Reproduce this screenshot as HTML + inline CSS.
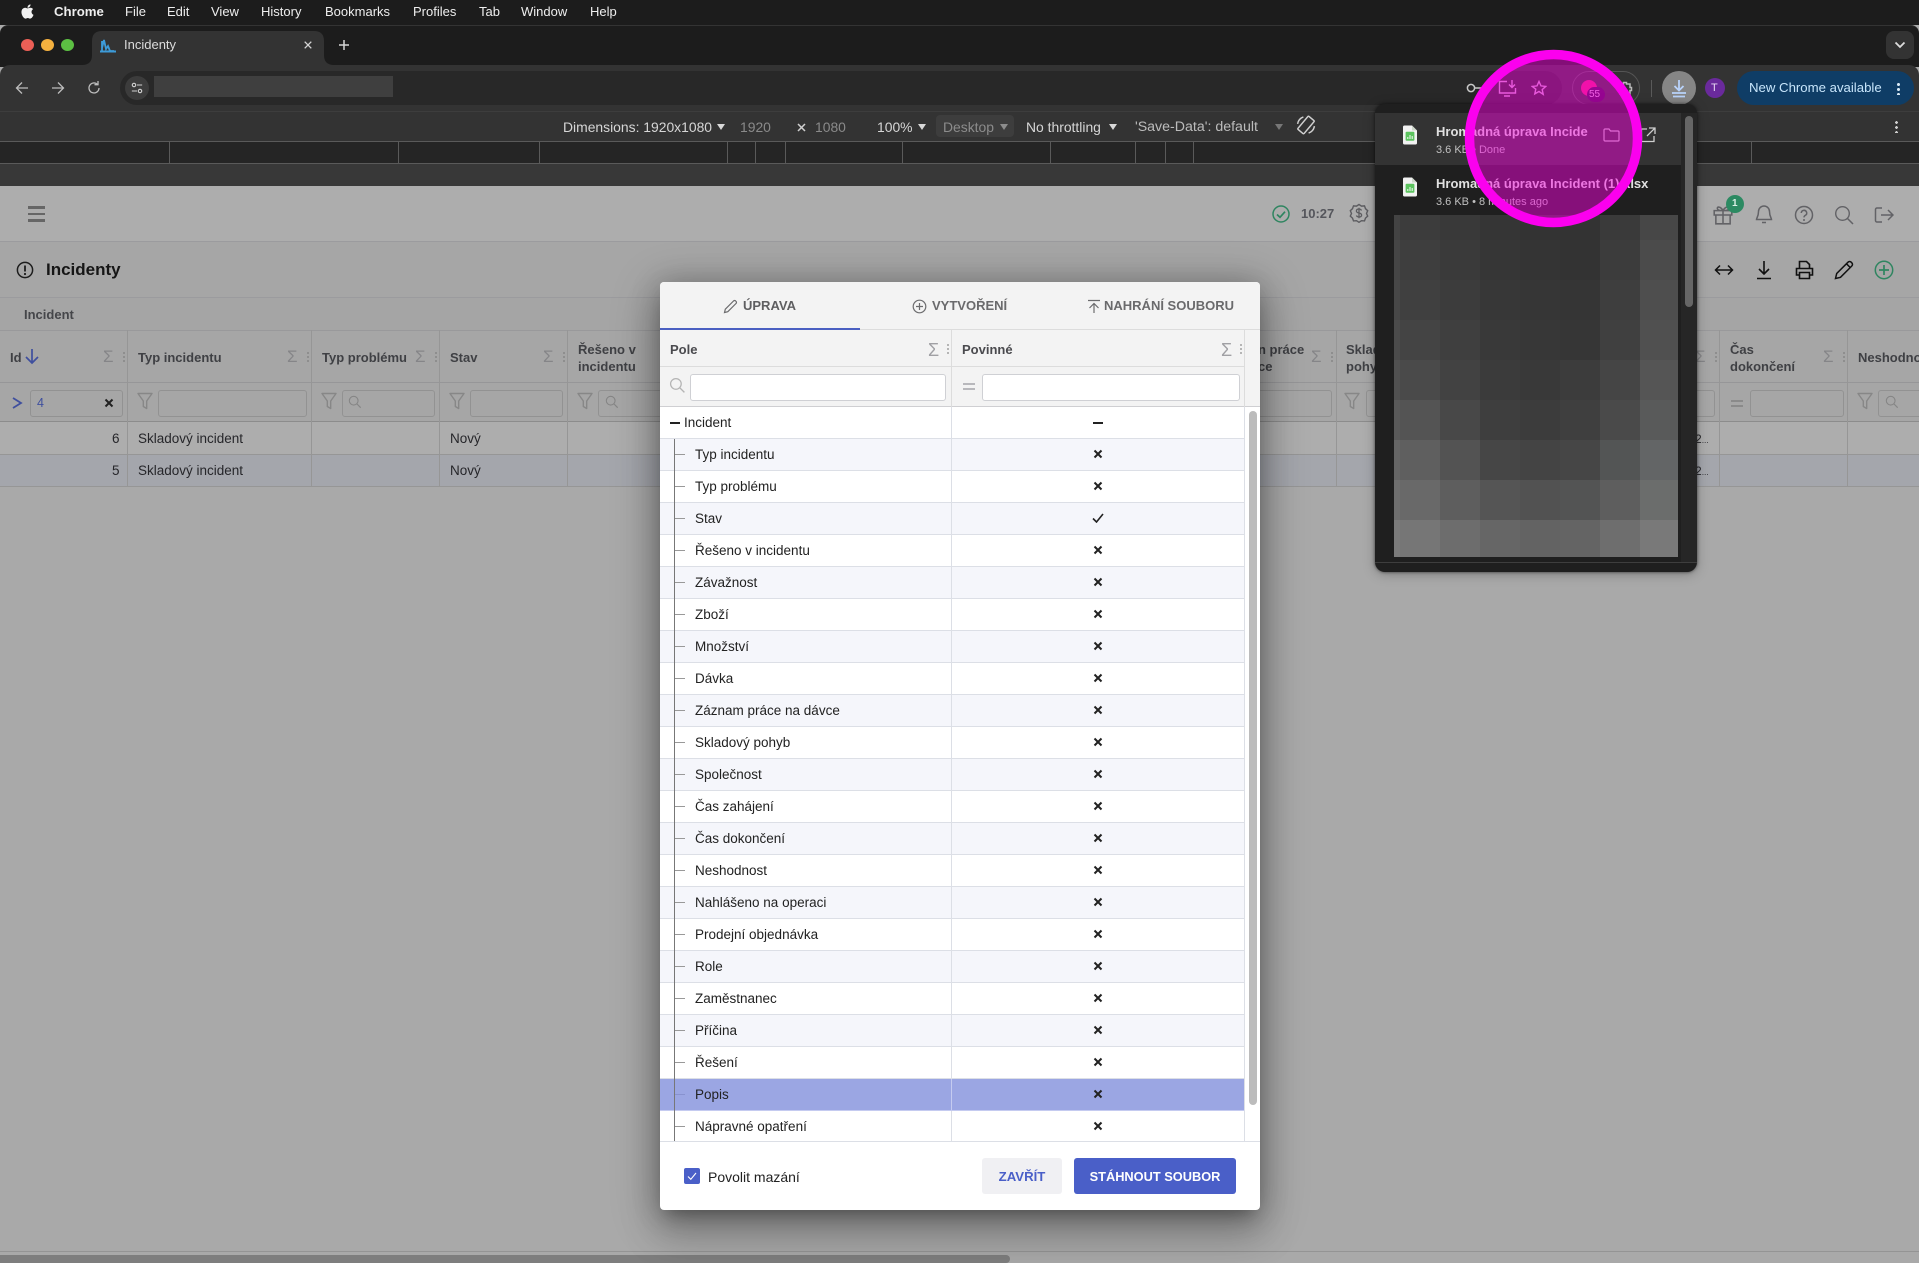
<!DOCTYPE html>
<html lang="cs"><head><meta charset="utf-8"><title>Incidenty</title>
<style>
html,body{margin:0;padding:0;background:#ababab}
#root{position:relative;width:1919px;height:1263px;overflow:hidden;font-family:"Liberation Sans",sans-serif;background:#a9a9a9}
#root div,#root span,#root svg{position:absolute}
.t{white-space:nowrap;line-height:16px}
.b{font-weight:bold}
.mn{top:4px;color:#eee;font-size:13px}
.db{top:119px;font-size:13.9px;color:#d6d6d6}
.tick{top:142px;width:1px;height:21px;background:#5a5a5a}
.car{width:0;height:0;border-left:4.5px solid transparent;border-right:4.5px solid transparent;border-top:6px solid #d8d8d8;top:124px}
.hd{font-size:13px;font-weight:bold;color:#3f4044;line-height:17px;white-space:nowrap}
.vl{width:1px;top:330px;height:156px;background:#969696}
.hl{left:0;width:1919px;height:1px;background:#969696}
.sg{font-size:17px;color:#858588;line-height:16px;top:349px}
.dots{width:2px;height:12px;background:radial-gradient(circle,#8a8a8a 1px,transparent 1.1px) 0 0/2px 4px}
.inp{top:390px;height:25px;border:1px solid #929292;border-radius:3px;box-sizing:content-box}
.cell{font-size:13.5px;color:#26262a;line-height:16px;white-space:nowrap}
#dlg{left:660px;top:282px;width:600px;height:928px;background:#fff;border-radius:4px;box-shadow:0 11px 15px -7px rgba(0,0,0,.25),0 24px 38px 3px rgba(0,0,0,.18),0 9px 46px 8px rgba(0,0,0,.16),0 0 30px rgba(0,0,0,.18)}
.dtab{top:16px;font-size:13px;font-weight:bold;color:#6a6a6c;white-space:nowrap;line-height:16px}
#rows{left:0;top:125px;width:584px;height:734px;overflow:hidden}
.r{position:relative!important;display:block;height:32px;width:584px;box-sizing:border-box;border-bottom:1px solid #dcdfe6;background:#fff}
.r.o{background:#f5f6fb}
.r.s{background:#9ba6e3;border-bottom-color:#c5cbf0}
.r .n{left:35px;top:8px;font-size:13.5px;color:#222;white-space:nowrap;line-height:16px}
.r .h{left:15px;top:15px;width:10px;height:1px;background:#999}
.r .c{left:291px;top:0;width:1px;height:32px;background:#dcdfe6}
.r svg{left:433px;top:10px;width:10px;height:10px}
.di{top:0;left:0}
.fi{top:392px;width:16px;height:18px}
</style></head><body>
<div id="root">
<svg width="0" height="0" style="left:0;top:0"><defs>
<symbol id="funnel" viewBox="0 0 16 18"><path d="M1 1.5h14L9.7 9v7.5L6.3 14.5V9z" fill="none" stroke="#878787" stroke-width="1.4" stroke-linejoin="round"/></symbol>
<symbol id="mag" viewBox="0 0 16 16"><circle cx="6.5" cy="6.5" r="5" fill="none" stroke="currentColor" stroke-width="1.2"/><path d="M10.3 10.3l4.2 4.2" stroke="currentColor" stroke-width="1.3" fill="none"/></symbol>
<symbol id="x" viewBox="0 0 10 10"><path d="M1.5 1.5l7 7M8.5 1.5l-7 7" stroke="#222" stroke-width="2" fill="none"/></symbol>
<symbol id="xl" viewBox="0 0 16 20"><path d="M1 2a1.5 1.5 0 0 1 1.5-1.5H10L15 5.5V18a1.5 1.5 0 0 1-1.5 1.5h-11A1.5 1.5 0 0 1 1 18z" fill="#f2f2f2"/><path d="M10 .5V5.5H15z" fill="#cfd8cc"/><rect x="3.6" y="6.8" width="8.8" height="9" rx="1" fill="#5cc45f"/><path d="M5.8 14v-2M8 14v-4M10.2 14v-3" stroke="#e8f6e8" stroke-width="1.1"/></symbol>
</defs></svg>

<!-- menu bar -->
<div style="left:0;top:0;width:1919px;height:25px;background:#1c1c1c"></div>
<svg style="left:18px;top:2px" width="19" height="19" viewBox="0 0 24 24"><path fill="#f2f2f2" d="M17.05 20.28c-.98.95-2.05.8-3.08.35-1.09-.46-2.09-.48-3.24 0-1.44.62-2.2.44-3.06-.35C2.79 15.25 3.51 7.59 9.05 7.31c1.35.07 2.29.74 3.08.8 1.18-.24 2.31-.93 3.57-.84 1.51.12 2.65.72 3.4 1.8-3.12 1.87-2.38 5.98.48 7.13-.57 1.5-1.31 2.99-2.54 4.09zM12.03 7.25c-.15-2.23 1.66-4.07 3.74-4.25.29 2.58-2.34 4.5-3.74 4.25z"/></svg>
<span class="t mn b" style="left:54px;font-size:13.2px">Chrome</span>
<span class="t mn" style="left:125px">File</span>
<span class="t mn" style="left:167px">Edit</span>
<span class="t mn" style="left:211px">View</span>
<span class="t mn" style="left:261px">History</span>
<span class="t mn" style="left:325px">Bookmarks</span>
<span class="t mn" style="left:413px">Profiles</span>
<span class="t mn" style="left:479px">Tab</span>
<span class="t mn" style="left:521px">Window</span>
<span class="t mn" style="left:590px">Help</span>

<!-- tab strip -->
<div style="left:0;top:25px;width:1919px;height:42px;background:#1c1c1c;border-top:1px solid #333;border-radius:8px 8px 0 0;box-sizing:border-box"></div>
<div style="left:21px;top:39px;width:13px;height:12px;border-radius:50%;background:#ec5f56"></div>
<div style="left:41px;top:39px;width:13px;height:12px;border-radius:50%;background:#f5b13f"></div>
<div style="left:61px;top:39px;width:13px;height:12px;border-radius:50%;background:#5cc043"></div>
<svg style="left:80px;top:31px" width="262" height="35" viewBox="80 31 262 35"><path fill="#333" d="M82 65Q92 65 92 55V41Q92 31 102 31H314Q324 31 324 41V55Q324 65 334 65z"/></svg>
<svg style="left:99px;top:38px" width="18" height="15" viewBox="0 0 18 15"><path d="M1 13.5h16" stroke="#3d9bd8" stroke-width="2" fill="none"/><path d="M3 13V3M3 10L5 2l2 9 2-3 2 5h4" stroke="#3d9bd8" stroke-width="1.8" fill="none"/></svg>
<span class="t" style="left:124px;top:37px;font-size:13px;color:#dcdcdc">Incidenty</span>
<svg style="left:304px;top:41px" width="8" height="8" viewBox="0 0 8 8"><path d="M.7.7l6.600 6.600M7.300.7L.7 7.300" stroke="#d5d5d5" stroke-width="1.3"/></svg>
<svg style="left:338px;top:39px" width="12" height="12" viewBox="0 0 12 12"><path d="M6 1v10M1 6h10" stroke="#d5d5d5" stroke-width="1.5"/></svg>
<div style="left:1886px;top:31px;width:28px;height:28px;background:#333;border-radius:8px"></div>
<svg style="left:1894px;top:41px" width="12" height="8" viewBox="0 0 12 8"><path d="M1.5 1.5L6 6l4.5-4.5" fill="none" stroke="#ddd" stroke-width="1.8"/></svg>

<!-- toolbar -->
<div style="left:0;top:65px;width:1919px;height:46px;background:#333;border-radius:10px 10px 0 0"></div>
<svg style="left:14px;top:80px" width="16" height="16" viewBox="0 0 16 16"><path d="M14 8H2.5M8 2.5L2.5 8 8 13.5" fill="none" stroke="#bdbdbd" stroke-width="1.3"/></svg>
<svg style="left:50px;top:80px" width="16" height="16" viewBox="0 0 16 16"><path d="M2 8h11.5M8 2.5L13.5 8 8 13.5" fill="none" stroke="#bdbdbd" stroke-width="1.3"/></svg>
<svg style="left:86px;top:80px" width="16" height="16" viewBox="0 0 16 16"><path d="M13 8a5 5 0 1 1-1.600-3.700M12 1v3.700H8.500" fill="none" stroke="#bdbdbd" stroke-width="1.3"/></svg>
<div style="left:120px;top:71px;width:1442px;height:34px;background:#282828;border-radius:17px"></div>
<div style="left:125px;top:76px;width:24px;height:24px;background:#3c3c3c;border-radius:50%"></div>
<svg style="left:131px;top:82px" width="12" height="12" viewBox="0 0 14 14"><circle cx="3.5" cy="3.5" r="2" fill="none" stroke="#d0d0d0" stroke-width="1.3"/><circle cx="10.5" cy="10.5" r="2" fill="none" stroke="#d0d0d0" stroke-width="1.3"/><path d="M7 3.5h6M1 10.5h6" stroke="#d0d0d0" stroke-width="1.3"/></svg>
<div style="left:154px;top:76px;width:239px;height:21px;background:#3f3f3f"></div>
<svg style="left:1466px;top:81px" width="20" height="14" viewBox="0 0 20 14"><circle cx="5" cy="7" r="3.6" fill="none" stroke="#c8c8c8" stroke-width="1.5"/><path d="M8.5 7H19" stroke="#c8c8c8" stroke-width="1.5"/></svg>
<svg style="left:1498px;top:79px" width="20" height="18" viewBox="0 0 20 18"><path d="M9 2.500H1.500V14h16V9M6 17h6M14 1v7.500M11 5.500l3 3 3-3" fill="none" stroke="#d8a8d8" stroke-width="1.4"/></svg>
<svg style="left:1531px;top:80px" width="16" height="16" viewBox="0 0 16 16"><path d="M8 1.500l2 4.400 4.800.5-3.600 3.200 1 4.700L8 11.500l-4.200 2.400 1-4.700L1.200 6.400 6 5.900z" fill="none" stroke="#d8a8d8" stroke-width="1.4"/></svg>
<div style="left:1572px;top:71px;width:68px;height:34px;border:1px solid #555;border-radius:17px;box-sizing:border-box"></div>
<div style="left:1581px;top:80px;width:16px;height:16px;background:#e8207a;border-radius:50%"></div>
<div style="left:1587px;top:87px;width:18px;height:15px;background:#3d0a4a;border-radius:8px"></div>
<span class="t" style="left:1589px;top:87px;font-size:10px;color:#e9b8e9">55</span>
<svg style="left:1618px;top:80px" width="16" height="16" viewBox="0 0 16 16"><path d="M2 4h3.500V2.500h3V4H12v3.500h1.500v3H12V14H2z" fill="none" stroke="#b8b8b8" stroke-width="1.5"/></svg>
<div style="left:1651px;top:80px;width:1px;height:17px;background:#5a5a5a"></div>
<div style="left:1662px;top:71px;width:34px;height:34px;background:#868686;border-radius:50%"></div>
<svg style="left:1670px;top:79px" width="18" height="19" viewBox="0 0 18 19"><path d="M9 1v10M4.500 7L9 11.500 13.500 7M2 14h14M3 17.500h12" fill="none" stroke="#b9d3fb" stroke-width="1.8"/></svg>
<div style="left:1705px;top:78px;width:20px;height:20px;background:#6a2a9c;border-radius:50%"></div>
<span class="t" style="left:1711px;top:80px;font-size:11px;color:#e6d6f2">T</span>
<div style="left:1737px;top:71px;width:177px;height:34px;background:#0f3d66;border-radius:17px"></div>
<span class="t" style="left:1749px;top:80px;font-size:13.2px;color:#c7e5fb">New Chrome available</span>
<div class="dots" style="left:1897px;top:82px;width:3px;height:13px;background:radial-gradient(circle,#d8e8f4 1.4px,transparent 1.6px) 0 0/3px 5px"></div>

<!-- device toolbar -->
<div style="left:0;top:111px;width:1919px;height:30px;background:#333;border-top:1px solid #3d3d3d;box-sizing:border-box"></div>
<span class="t db" style="left:563px">Dimensions: 1920x1080</span><div class="car" style="left:717px"></div>
<span class="t db" style="left:740px;color:#8a8a8a">1920</span>
<svg style="left:797px;top:123px" width="9" height="9" viewBox="0 0 9 9"><path d="M1 1l7 7M8 1L1 8" stroke="#cfcfcf" stroke-width="1.5"/></svg>
<span class="t db" style="left:815px;color:#8a8a8a">1080</span>
<span class="t db" style="left:877px">100%</span><div class="car" style="left:918px"></div>
<div style="left:936px;top:115px;width:78px;height:22px;background:#3d3d3d;border-radius:4px"></div>
<span class="t db" style="left:943px;color:#8c8c8c">Desktop</span><div class="car" style="left:1000px;border-top-color:#8c8c8c"></div>
<span class="t db" style="left:1026px">No throttling</span><div class="car" style="left:1109px"></div>
<span class="t db" style="left:1135px;color:#bcbcbc;font-size:14.2px">'Save-Data': default</span><div class="car" style="left:1275px;border-top-color:#777"></div>
<svg style="left:1296px;top:115px" width="20" height="20" viewBox="0 0 20 20"><g fill="none" stroke="#d0d0d0" stroke-width="1.5" transform="rotate(40 10 10)"><rect x="6" y="1.500" width="8" height="17" rx="1"/><path d="M2.800 5.500A9 9 0 0 0 2.800 14.500M17.200 5.500A9 9 0 0 1 17.200 14.500"/></g></svg>
<div class="dots" style="left:1895px;top:120px;width:3px;height:13px;background:radial-gradient(circle,#cfcfcf 1.3px,transparent 1.5px) 0 0/3px 5px"></div>

<!-- ruler -->
<div style="left:0;top:141px;width:1919px;height:23px;background:#252525;border-top:1px solid #5a5a5a;border-bottom:1px solid #5a5a5a;box-sizing:border-box"></div>
<div class="tick" style="left:169px"></div><div class="tick" style="left:398px"></div><div class="tick" style="left:539px"></div><div class="tick" style="left:727px"></div><div class="tick" style="left:755px"></div><div class="tick" style="left:785px"></div><div class="tick" style="left:902px"></div><div class="tick" style="left:1050px"></div><div class="tick" style="left:1135px"></div><div class="tick" style="left:1165px"></div><div class="tick" style="left:1193px"></div><div class="tick" style="left:1751px"></div>
<div style="left:0;top:164px;width:1919px;height:22px;background:#383838"></div>

<!-- page header -->
<div style="left:0;top:186px;width:1919px;height:55px;background:#adadad"></div>
<div class="hl" style="top:241px;background:#9b9b9e"></div>
<div style="left:28px;top:206px;width:17px;height:2.5px;background:#666"></div>
<div style="left:28px;top:212.500px;width:17px;height:2.500px;background:#666"></div>
<div style="left:28px;top:219px;width:17px;height:2.500px;background:#666"></div>
<svg style="left:1271px;top:204px" width="20" height="20" viewBox="0 0 20 20"><circle cx="10" cy="10" r="8" fill="none" stroke="#2f8560" stroke-width="1.5"/><path d="M6 10.500l3 2.800 5-5.600" fill="none" stroke="#2f8560" stroke-width="1.7"/></svg>
<span class="t b" style="left:1301px;top:206px;font-size:13px;color:#55565c">10:27</span>
<svg style="left:1349px;top:203px" width="20" height="20" viewBox="0 0 20 20"><path d="M10 1.500l2.500 1.600 3-.2 1 2.800 2.200 2-1.200 2.800 1.200 2.600-2.200 2-1 2.800-3-.2-2.500 1.600-2.500-1.600-3 .2-1-2.800-2.200-2 1.200-2.600-1.200-2.800 2.200-2 1-2.800 3 .2z" fill="none" stroke="#5c5c60" stroke-width="1.4"/><path d="M12.500 7.500C12 6.500 11 6 10 6c-1.600 0-2.600.8-2.600 2S8.500 9.700 10 10s2.600 1 2.600 2.100S11.600 14 10 14c-1.100 0-2.100-.5-2.600-1.500M10 4.800v10.400" fill="none" stroke="#5c5c60" stroke-width="1.3"/></svg>
<svg style="left:1712px;top:204px" width="22" height="22" viewBox="0 0 20 20"><path d="M2 6h16v4H2zM3.500 10v8h13v-8M10 6v12M10 6C8 2 4 2 5 4.500 5.500 6 10 6 10 6zM10 6c2-4 6-4 5-1.500C14.500 6 10 6 10 6z" fill="none" stroke="#626266" stroke-width="1.4"/></svg>
<div style="left:1726px;top:195px;width:18px;height:18px;background:#2c8a62;border-radius:50%"></div>
<span class="t b" style="left:1732px;top:196px;font-size:10px;color:#d9eee4">1</span>
<svg style="left:1755px;top:204px" width="18" height="21" viewBox="0 0 18 21"><path d="M9 2a5.500 5.500 0 0 0-5.500 5.500c0 5-2 6.500-2 8h15c0-1.500-2-3-2-8A5.500 5.500 0 0 0 9 2zM7 18.500h4" fill="none" stroke="#626266" stroke-width="1.5"/></svg>
<svg style="left:1794px;top:205px" width="20" height="20" viewBox="0 0 20 20"><circle cx="10" cy="10" r="8.500" fill="none" stroke="#626266" stroke-width="1.5"/><path d="M7.300 8a2.700 2.700 0 1 1 4 2.400c-.9.5-1.300 1-1.300 2" fill="none" stroke="#626266" stroke-width="1.5"/><circle cx="10" cy="15" r="1" fill="#626266"/></svg>
<svg style="left:1834px;top:205px" width="20" height="20" viewBox="0 0 20 20"><circle cx="8.500" cy="8.500" r="6.800" fill="none" stroke="#626266" stroke-width="1.4"/><path d="M13.500 13.500l5.500 5.500" stroke="#626266" stroke-width="1.500"/></svg>
<svg style="left:1874px;top:206px" width="20" height="18" viewBox="0 0 20 18"><path d="M8 2H3a1.500 1.500 0 0 0-1.500 1.500v11A1.500 1.500 0 0 0 3 16h5M7 9h12M14 4l5 5-5 5" fill="none" stroke="#626266" stroke-width="1.500"/></svg>

<!-- title band -->
<div style="left:0;top:242px;width:1919px;height:55px;background:#a6a6a6"></div>
<svg style="left:16px;top:261px" width="18" height="18" viewBox="0 0 18 18"><circle cx="9" cy="9" r="7.600" fill="none" stroke="#1d1d1d" stroke-width="1.500"/><path d="M9 4.500v6" stroke="#1d1d1d" stroke-width="1.800"/><circle cx="9" cy="13" r="1.100" fill="#1d1d1d"/></svg>
<span class="t b" style="left:46px;top:261px;font-size:17px;line-height:18px;color:#161616">Incidenty</span>
<svg style="left:1714px;top:262px" width="20" height="16" viewBox="0 0 20 16"><path d="M1.500 8h17M6 3.500L1.500 8 6 12.500M14 3.500L18.500 8 14 12.500" fill="none" stroke="#111" stroke-width="1.500"/></svg>
<svg style="left:1756px;top:260px" width="16" height="20" viewBox="0 0 16 20"><path d="M8 1v13M3 9l5 5 5-5M1 18.500h14" fill="none" stroke="#111" stroke-width="1.600"/></svg>
<svg style="left:1795px;top:260px" width="19" height="20" viewBox="0 0 19 20"><path d="M4.500 8V1.500h7l3 3V8M4.500 15H1.500V8.500h16V15h-3M4.500 12.500h10v6h-10z" fill="none" stroke="#111" stroke-width="1.600"/></svg>
<svg style="left:1834px;top:260px" width="20" height="20" viewBox="0 0 20 20"><path d="M1.500 18.500l1.200-5L14 2.200a2.200 2.200 0 0 1 3.200 0l.6.6a2.200 2.200 0 0 1 0 3.200L6.500 17.300zM12.500 3.800l3.700 3.700" fill="none" stroke="#111" stroke-width="1.500"/></svg>
<svg style="left:1874px;top:260px" width="20" height="20" viewBox="0 0 20 20"><circle cx="10" cy="10" r="8.700" fill="none" stroke="#2f8560" stroke-width="1.500"/><path d="M10 5v10M5 10h10" stroke="#2f8560" stroke-width="1.700"/></svg>

<!-- table -->
<div class="hl" style="top:297px;background:#9b9b9e"></div>
<div style="left:0;top:298px;width:1919px;height:32px;background:#a5a5a5"></div>
<span class="t b" style="left:24px;top:307px;font-size:13px;color:#45464a">Incident</span>
<div class="hl" style="top:330px;background:#99999b"></div>
<div style="left:0;top:331px;width:1919px;height:91px;background:#a6a6a6"></div>
<div class="hl" style="top:382px;background:#969698"></div>
<div style="left:0;top:422px;width:1919px;height:32px;background:#adadad"></div>
<div style="left:0;top:454px;width:1919px;height:32px;background:#a4a6ac"></div>
<div class="hl" style="top:421px;background:#8c8c8c"></div>
<div class="hl" style="top:454px"></div>
<div class="hl" style="top:486px"></div>
<div class="vl" style="left:127px"></div><div class="vl" style="left:311px"></div><div class="vl" style="left:439px"></div><div class="vl" style="left:567px"></div>
<div class="vl" style="left:1336px"></div><div class="vl" style="left:1719px"></div><div class="vl" style="left:1847px"></div>

<span class="hd" style="left:10px;top:349px">Id</span>
<svg style="left:24px;top:348px" width="16" height="17" viewBox="0 0 16 17"><path d="M8 1v14M2 9l6 6 6-6" fill="none" stroke="#3f4f9e" stroke-width="1.700"/></svg>
<span class="sg" style="left:103px">Σ</span><div class="dots" style="left:123px;top:351px"></div>
<span class="hd" style="left:138px;top:349px">Typ incidentu</span>
<span class="sg" style="left:287px">Σ</span><div class="dots" style="left:307px;top:351px"></div>
<span class="hd" style="left:322px;top:349px">Typ problému</span>
<span class="sg" style="left:415px">Σ</span><div class="dots" style="left:435px;top:351px"></div>
<span class="hd" style="left:450px;top:349px">Stav</span>
<span class="sg" style="left:543px">Σ</span><div class="dots" style="left:563px;top:351px"></div>
<span class="hd" style="left:578px;top:341px">Řešeno v<br>incidentu</span>
<span class="hd" style="left:1258px;top:341px">n práce<br><span style="position:static">ce</span></span>
<span class="sg" style="left:1311px">Σ</span><div class="dots" style="left:1331px;top:351px"></div>
<span class="hd" style="left:1346px;top:341px">Skladový<br>pohyb</span>
<span class="sg" style="left:1695px">Σ</span><div class="dots" style="left:1715px;top:351px"></div>
<span class="hd" style="left:1730px;top:341px">Čas<br>dokončení</span>
<span class="sg" style="left:1823px">Σ</span><div class="dots" style="left:1843px;top:351px"></div>
<span class="hd" style="left:1858px;top:349px">Neshodnost</span>

<svg style="left:11px;top:396px" width="12" height="14" viewBox="0 0 12 14"><path d="M2 2l8 5-8 5" fill="none" stroke="#3f4f9e" stroke-width="1.800"/></svg>
<div class="inp" style="left:30px;width:91px"></div>
<span class="t" style="left:37px;top:395px;font-size:12.500px;color:#3f4f9e">4</span>
<svg style="left:104px;top:398px" width="10" height="10" viewBox="0 0 10 10"><use href="#x"/></svg>
<svg class="fi" style="left:137px"><use href="#funnel"/></svg>
<div class="inp" style="left:158px;width:147px"></div>
<svg class="fi" style="left:321px"><use href="#funnel"/></svg>
<div class="inp" style="left:342px;width:91px"></div>
<svg style="left:348px;top:395px;color:#858585" width="14" height="14"><use href="#mag"/></svg>
<svg class="fi" style="left:449px"><use href="#funnel"/></svg>
<div class="inp" style="left:470px;width:91px"></div>
<svg class="fi" style="left:577px"><use href="#funnel"/></svg>
<div class="inp" style="left:598px;width:91px"></div>
<svg style="left:605px;top:395px;color:#858585" width="14" height="14"><use href="#mag"/></svg>
<div class="inp" style="left:1200px;width:130px"></div>
<svg class="fi" style="left:1344px"><use href="#funnel"/></svg>
<div class="inp" style="left:1366px;width:110px"></div>
<div class="inp" style="left:1600px;width:113px"></div>
<div style="left:1731px;top:400px;width:12px;height:2px;background:#8a8a8a"></div>
<div style="left:1731px;top:405px;width:12px;height:2px;background:#8a8a8a"></div>
<div class="inp" style="left:1750px;width:92px"></div>
<svg class="fi" style="left:1857px"><use href="#funnel"/></svg>
<div class="inp" style="left:1878px;width:60px"></div>
<svg style="left:1885px;top:395px;color:#858585" width="14" height="14"><use href="#mag"/></svg>

<span class="cell" style="left:112px;top:431px">6</span>
<span class="cell" style="left:138px;top:431px">Skladový incident</span>
<span class="cell" style="left:450px;top:431px">Nový</span>
<span class="cell" style="left:112px;top:463px">5</span>
<span class="cell" style="left:138px;top:463px">Skladový incident</span>
<span class="cell" style="left:450px;top:463px">Nový</span>
<span class="cell" style="left:1695px;top:431px;font-size:12px">2<span style="position:static;font-size:8.500px">...</span></span>
<span class="cell" style="left:1695px;top:463px;font-size:12px">2<span style="position:static;font-size:8.500px">...</span></span>

<!-- bottom scrollbar -->
<div class="hl" style="top:1251px;background:#949494"></div>
<div style="left:0;top:1255px;width:1010px;height:8px;background:#7e7e7e;border-radius:0 4px 4px 0"></div>

<!-- dialog -->
<div id="dlg">
 <div class="di" style="width:600px;height:125px;background:#f3f3f3;border-radius:4px 4px 0 0"></div>
 <svg style="left:63px;top:17px" width="15" height="15" viewBox="0 0 15 15"><path d="M1.500 13.500l.8-3.300L10.500 2a1.500 1.500 0 0 1 2.200 0l.3.3a1.500 1.500 0 0 1 0 2.200L4.800 12.700z" fill="none" stroke="#6c6c6e" stroke-width="1.200"/></svg>
 <span class="dtab" style="left:83px;color:#5e5e60">ÚPRAVA</span>
 <svg style="left:252px;top:17px" width="15" height="15" viewBox="0 0 15 15"><circle cx="7.500" cy="7.500" r="6.300" fill="none" stroke="#6c6c6e" stroke-width="1.200"/><path d="M7.500 4v7M4 7.500h7" stroke="#6c6c6e" stroke-width="1.200"/></svg>
 <span class="dtab" style="left:272px">VYTVOŘENÍ</span>
 <svg style="left:427px;top:17px" width="14" height="15" viewBox="0 0 14 15"><path d="M1 1.500h12M7 14V4.500M2.500 9L7 4.500 11.500 9" fill="none" stroke="#6c6c6e" stroke-width="1.200"/></svg>
 <span class="dtab" style="left:444px">NAHRÁNÍ SOUBORU</span>
 <div style="left:0;top:46px;width:200px;height:2px;background:#4a5fc1"></div>
 <div style="left:200px;top:47px;width:400px;height:1px;background:#dcdcdc"></div>
 <div style="left:0;top:84px;width:584px;height:1px;background:#dcdcdc"></div>
 <div style="left:0;top:124px;width:600px;height:1px;background:#cfcfd2"></div>
 <div style="left:291px;top:48px;width:1px;height:77px;background:#dcdcdc"></div>
 <div style="left:584px;top:48px;width:1px;height:77px;background:#dcdcdc"></div>
 <span class="t b" style="left:10px;top:60px;font-size:13px;color:#4a4a4e">Pole</span>
 <span class="t" style="left:268px;top:60px;font-size:18px;color:#a0a0a4">Σ</span>
 <div class="dots" style="left:287px;top:61px;background:radial-gradient(circle,#aaa 1px,transparent 1.100px) 0 0/2px 4px"></div>
 <span class="t b" style="left:302px;top:60px;font-size:13px;color:#4a4a4e">Povinné</span>
 <span class="t" style="left:561px;top:60px;font-size:18px;color:#a0a0a4">Σ</span>
 <div class="dots" style="left:580px;top:61px;background:radial-gradient(circle,#aaa 1px,transparent 1.100px) 0 0/2px 4px"></div>
 <svg style="left:9px;top:95px;color:#b4b4b4" width="17" height="17"><use href="#mag"/></svg>
 <div style="left:30px;top:92px;background:#fff;border:1px solid #cfd0d4;border-radius:3px;box-sizing:border-box;width:256px;height:27px"></div>
 <div style="left:303px;top:101px;width:12px;height:2px;background:#b8b8bc"></div>
 <div style="left:303px;top:106px;width:12px;height:2px;background:#b8b8bc"></div>
 <div style="left:322px;top:92px;width:258px;height:27px;background:#fff;border:1px solid #cfd0d4;border-radius:3px;box-sizing:border-box"></div>

 <div id="rows">
  <div class="r"><div class="c"></div><div style="left:10px;top:15px;width:10px;height:2px;background:#222"></div><span class="n" style="left:24px">Incident</span><div style="left:433px;top:15px;width:10px;height:2px;background:#222"></div></div>
  <div class="r o"><div class="c"></div><div class="h"></div><span class="n">Typ incidentu</span><svg><use href="#x"/></svg></div>
  <div class="r"><div class="c"></div><div class="h"></div><span class="n">Typ problému</span><svg><use href="#x"/></svg></div>
  <div class="r o"><div class="c"></div><div class="h"></div><span class="n">Stav</span><svg viewBox="0 0 12 10" style="left:432px;width:12px"><path d="M1 5.500l3.500 3.500L11 1" fill="none" stroke="#222" stroke-width="1.600"/></svg></div>
  <div class="r"><div class="c"></div><div class="h"></div><span class="n">Řešeno v incidentu</span><svg><use href="#x"/></svg></div>
  <div class="r o"><div class="c"></div><div class="h"></div><span class="n">Závažnost</span><svg><use href="#x"/></svg></div>
  <div class="r"><div class="c"></div><div class="h"></div><span class="n">Zboží</span><svg><use href="#x"/></svg></div>
  <div class="r o"><div class="c"></div><div class="h"></div><span class="n">Množství</span><svg><use href="#x"/></svg></div>
  <div class="r"><div class="c"></div><div class="h"></div><span class="n">Dávka</span><svg><use href="#x"/></svg></div>
  <div class="r o"><div class="c"></div><div class="h"></div><span class="n">Záznam práce na dávce</span><svg><use href="#x"/></svg></div>
  <div class="r"><div class="c"></div><div class="h"></div><span class="n">Skladový pohyb</span><svg><use href="#x"/></svg></div>
  <div class="r o"><div class="c"></div><div class="h"></div><span class="n">Společnost</span><svg><use href="#x"/></svg></div>
  <div class="r"><div class="c"></div><div class="h"></div><span class="n">Čas zahájení</span><svg><use href="#x"/></svg></div>
  <div class="r o"><div class="c"></div><div class="h"></div><span class="n">Čas dokončení</span><svg><use href="#x"/></svg></div>
  <div class="r"><div class="c"></div><div class="h"></div><span class="n">Neshodnost</span><svg><use href="#x"/></svg></div>
  <div class="r o"><div class="c"></div><div class="h"></div><span class="n">Nahlášeno na operaci</span><svg><use href="#x"/></svg></div>
  <div class="r"><div class="c"></div><div class="h"></div><span class="n">Prodejní objednávka</span><svg><use href="#x"/></svg></div>
  <div class="r o"><div class="c"></div><div class="h"></div><span class="n">Role</span><svg><use href="#x"/></svg></div>
  <div class="r"><div class="c"></div><div class="h"></div><span class="n">Zaměstnanec</span><svg><use href="#x"/></svg></div>
  <div class="r o"><div class="c"></div><div class="h"></div><span class="n">Příčina</span><svg><use href="#x"/></svg></div>
  <div class="r"><div class="c"></div><div class="h"></div><span class="n">Řešení</span><svg><use href="#x"/></svg></div>
  <div class="r s"><div class="c" style="background:#c5cbf0"></div><div class="h" style="background:#8892cf"></div><span class="n">Popis</span><svg><use href="#x"/></svg></div>
  <div class="r"><div class="c"></div><div class="h"></div><span class="n">Nápravné opatření</span><svg><use href="#x"/></svg></div>
 </div>
 <div style="left:14px;top:157px;width:1px;height:702px;background:#777"></div>
 <div style="left:584px;top:125px;width:1px;height:734px;background:#dcdfe6"></div>
 <div style="left:589px;top:129px;width:8px;height:694px;background:#bcbcbc;border-radius:4px"></div>
 <div style="left:0;top:859px;width:600px;height:1px;background:#dcdfe6"></div>

 <div style="left:24px;top:886px;width:16px;height:16px;background:#4a5fc8;border-radius:2px"></div>
 <svg style="left:26px;top:888px" width="12" height="12" viewBox="0 0 12 12"><path d="M2 6.500l2.800 2.800L10 3" fill="none" stroke="#fff" stroke-width="1.100"/></svg>
 <span class="t" style="left:48px;top:887px;font-size:14px;color:#222">Povolit mazání</span>
 <div style="left:322px;top:876px;width:80px;height:36px;background:#f0f0f3;border-radius:3px"></div>
 <span class="t b" style="left:322px;top:887px;width:80px;text-align:center;font-size:13.200px;color:#4a5fc8">ZAVŘÍT</span>
 <div style="left:414px;top:876px;width:162px;height:36px;background:#4a5fc8;border-radius:3px"></div>
 <span class="t b" style="left:414px;top:887px;width:162px;text-align:center;font-size:12.800px;color:#fff">STÁHNOUT SOUBOR</span>
</div>

<!-- download popup -->
<div style="left:1375px;top:104px;width:322px;height:468px;background:#1f1f1f;border-radius:10px;box-shadow:0 0 3px rgba(0,0,0,.6),0 2px 12px rgba(0,0,0,.25)"></div>
<div style="left:1681px;top:113px;width:16px;height:449px;background:#262626"></div>
<div style="left:1375px;top:113px;width:306px;height:52px;background:#333"></div>
<div style="left:1685px;top:116px;width:8px;height:191px;background:#666;border-radius:4px"></div>
<div style="left:1375px;top:562px;width:322px;height:1px;background:#3e3e3e"></div>
<svg style="left:1402px;top:125px" width="16" height="20"><use href="#xl"/></svg>
<svg style="left:1402px;top:177px" width="16" height="20"><use href="#xl"/></svg>
<span class="t b" style="left:1436px;top:124px;font-size:13px;color:#e0e0e0">Hromadná úprava Incide</span>
<span class="t" style="left:1436px;top:142px;font-size:11px;color:#c0c0c0">3.6 KB • Done</span>
<svg style="left:1603px;top:128px" width="17" height="14" viewBox="0 0 17 14"><path d="M1 2a1 1 0 0 1 1-1h4l1.500 2H15a1 1 0 0 1 1 1v8a1 1 0 0 1-1 1H2a1 1 0 0 1-1-1z" fill="none" stroke="#c8c8c8" stroke-width="1.200"/></svg>
<svg style="left:1640px;top:127px" width="16" height="16" viewBox="0 0 16 16"><path d="M7 2H1.500v12.500H14V9M9 1h6v6M15 1L7 9" fill="none" stroke="#cfcfcf" stroke-width="1.300"/></svg>
<span class="t b" style="left:1436px;top:176px;font-size:13px;color:#e0e0e0">Hromadná úprava Incident (1).xlsx</span>
<span class="t" style="left:1436px;top:194px;font-size:11px;color:#c0c0c0">3.6 KB • 8 minutes ago</span>
<svg style="left:1394px;top:215px" width="284" height="342" viewBox="0 0 284 342" shape-rendering="crispEdges">
<g>
<rect y="0" width="46" height="25" fill="#3c3c3c"/><rect x="46" width="40" height="25" fill="#393939"/><rect x="86" width="40" height="25" fill="#353535"/><rect x="126" width="40" height="25" fill="#333"/><rect x="166" width="40" height="25" fill="#333"/><rect x="206" width="40" height="25" fill="#3a3a3a"/><rect x="246" width="38" height="25" fill="#474747"/>
<rect y="25" width="46" height="40" fill="#3e3e3e"/><rect x="46" y="25" width="40" height="40" fill="#3a3a3a"/><rect x="86" y="25" width="40" height="40" fill="#363636"/><rect x="126" y="25" width="40" height="40" fill="#343434"/><rect x="166" y="25" width="40" height="40" fill="#333"/><rect x="206" y="25" width="40" height="40" fill="#3c3c3c"/><rect x="246" y="25" width="38" height="40" fill="#4b4b4b"/>
<rect y="65" width="46" height="40" fill="#404040"/><rect x="46" y="65" width="40" height="40" fill="#3c3c3c"/><rect x="86" y="65" width="40" height="40" fill="#373737"/><rect x="126" y="65" width="40" height="40" fill="#363636"/><rect x="166" y="65" width="40" height="40" fill="#353535"/><rect x="206" y="65" width="40" height="40" fill="#3e3e3e"/><rect x="246" y="65" width="38" height="40" fill="#4e4e4e"/>
<rect y="105" width="46" height="40" fill="#444"/><rect x="46" y="105" width="40" height="40" fill="#3f3f3f"/><rect x="86" y="105" width="40" height="40" fill="#393939"/><rect x="126" y="105" width="40" height="40" fill="#373737"/><rect x="166" y="105" width="40" height="40" fill="#363636"/><rect x="206" y="105" width="40" height="40" fill="#404040"/><rect x="246" y="105" width="38" height="40" fill="#505050"/>
<rect y="145" width="46" height="40" fill="#4a4a4a"/><rect x="46" y="145" width="40" height="40" fill="#424242"/><rect x="86" y="145" width="40" height="40" fill="#3b3b3b"/><rect x="126" y="145" width="40" height="40" fill="#393939"/><rect x="166" y="145" width="40" height="40" fill="#3c3c3c"/><rect x="206" y="145" width="40" height="40" fill="#454545"/><rect x="246" y="145" width="38" height="40" fill="#555"/>
<rect y="185" width="46" height="40" fill="#545454"/><rect x="46" y="185" width="40" height="40" fill="#484848"/><rect x="86" y="185" width="40" height="40" fill="#3e3e3e"/><rect x="126" y="185" width="40" height="40" fill="#3c3c3c"/><rect x="166" y="185" width="40" height="40" fill="#3f3f3f"/><rect x="206" y="185" width="40" height="40" fill="#4a4a4a"/><rect x="246" y="185" width="38" height="40" fill="#595a5a"/>
<rect y="225" width="46" height="40" fill="#5f5f5f"/><rect x="46" y="225" width="40" height="40" fill="#535353"/><rect x="86" y="225" width="40" height="40" fill="#464646"/><rect x="126" y="225" width="40" height="40" fill="#444"/><rect x="166" y="225" width="40" height="40" fill="#464646"/><rect x="206" y="225" width="40" height="40" fill="#535555"/><rect x="246" y="225" width="38" height="40" fill="#636566"/>
<rect y="265" width="46" height="40" fill="#696969"/><rect x="46" y="265" width="40" height="40" fill="#5e5e5e"/><rect x="86" y="265" width="40" height="40" fill="#555"/><rect x="126" y="265" width="40" height="40" fill="#525252"/><rect x="166" y="265" width="40" height="40" fill="#535454"/><rect x="206" y="265" width="40" height="40" fill="#5e5e5e"/><rect x="246" y="265" width="38" height="40" fill="#6b6d6c"/>
<rect y="305" width="46" height="37" fill="#767676"/><rect x="46" y="305" width="40" height="37" fill="#6d6d6d"/><rect x="86" y="305" width="40" height="37" fill="#666"/><rect x="126" y="305" width="40" height="37" fill="#636363"/><rect x="166" y="305" width="40" height="37" fill="#646464"/><rect x="206" y="305" width="40" height="37" fill="#6e6e6e"/><rect x="246" y="305" width="38" height="37" fill="#797979"/>
<rect x="0" y="0" width="6" height="342" fill="#fff" opacity=".04"/>
</g></svg>

<!-- annotation -->
<svg style="left:1460px;top:45px" width="190" height="190" viewBox="1460 45 190 190"><circle cx="1553.500" cy="138.500" r="84" fill="rgb(250,0,225)" fill-opacity=".47" stroke="#fb00ee" stroke-width="9.500"/></svg>
</div>
</body></html>
